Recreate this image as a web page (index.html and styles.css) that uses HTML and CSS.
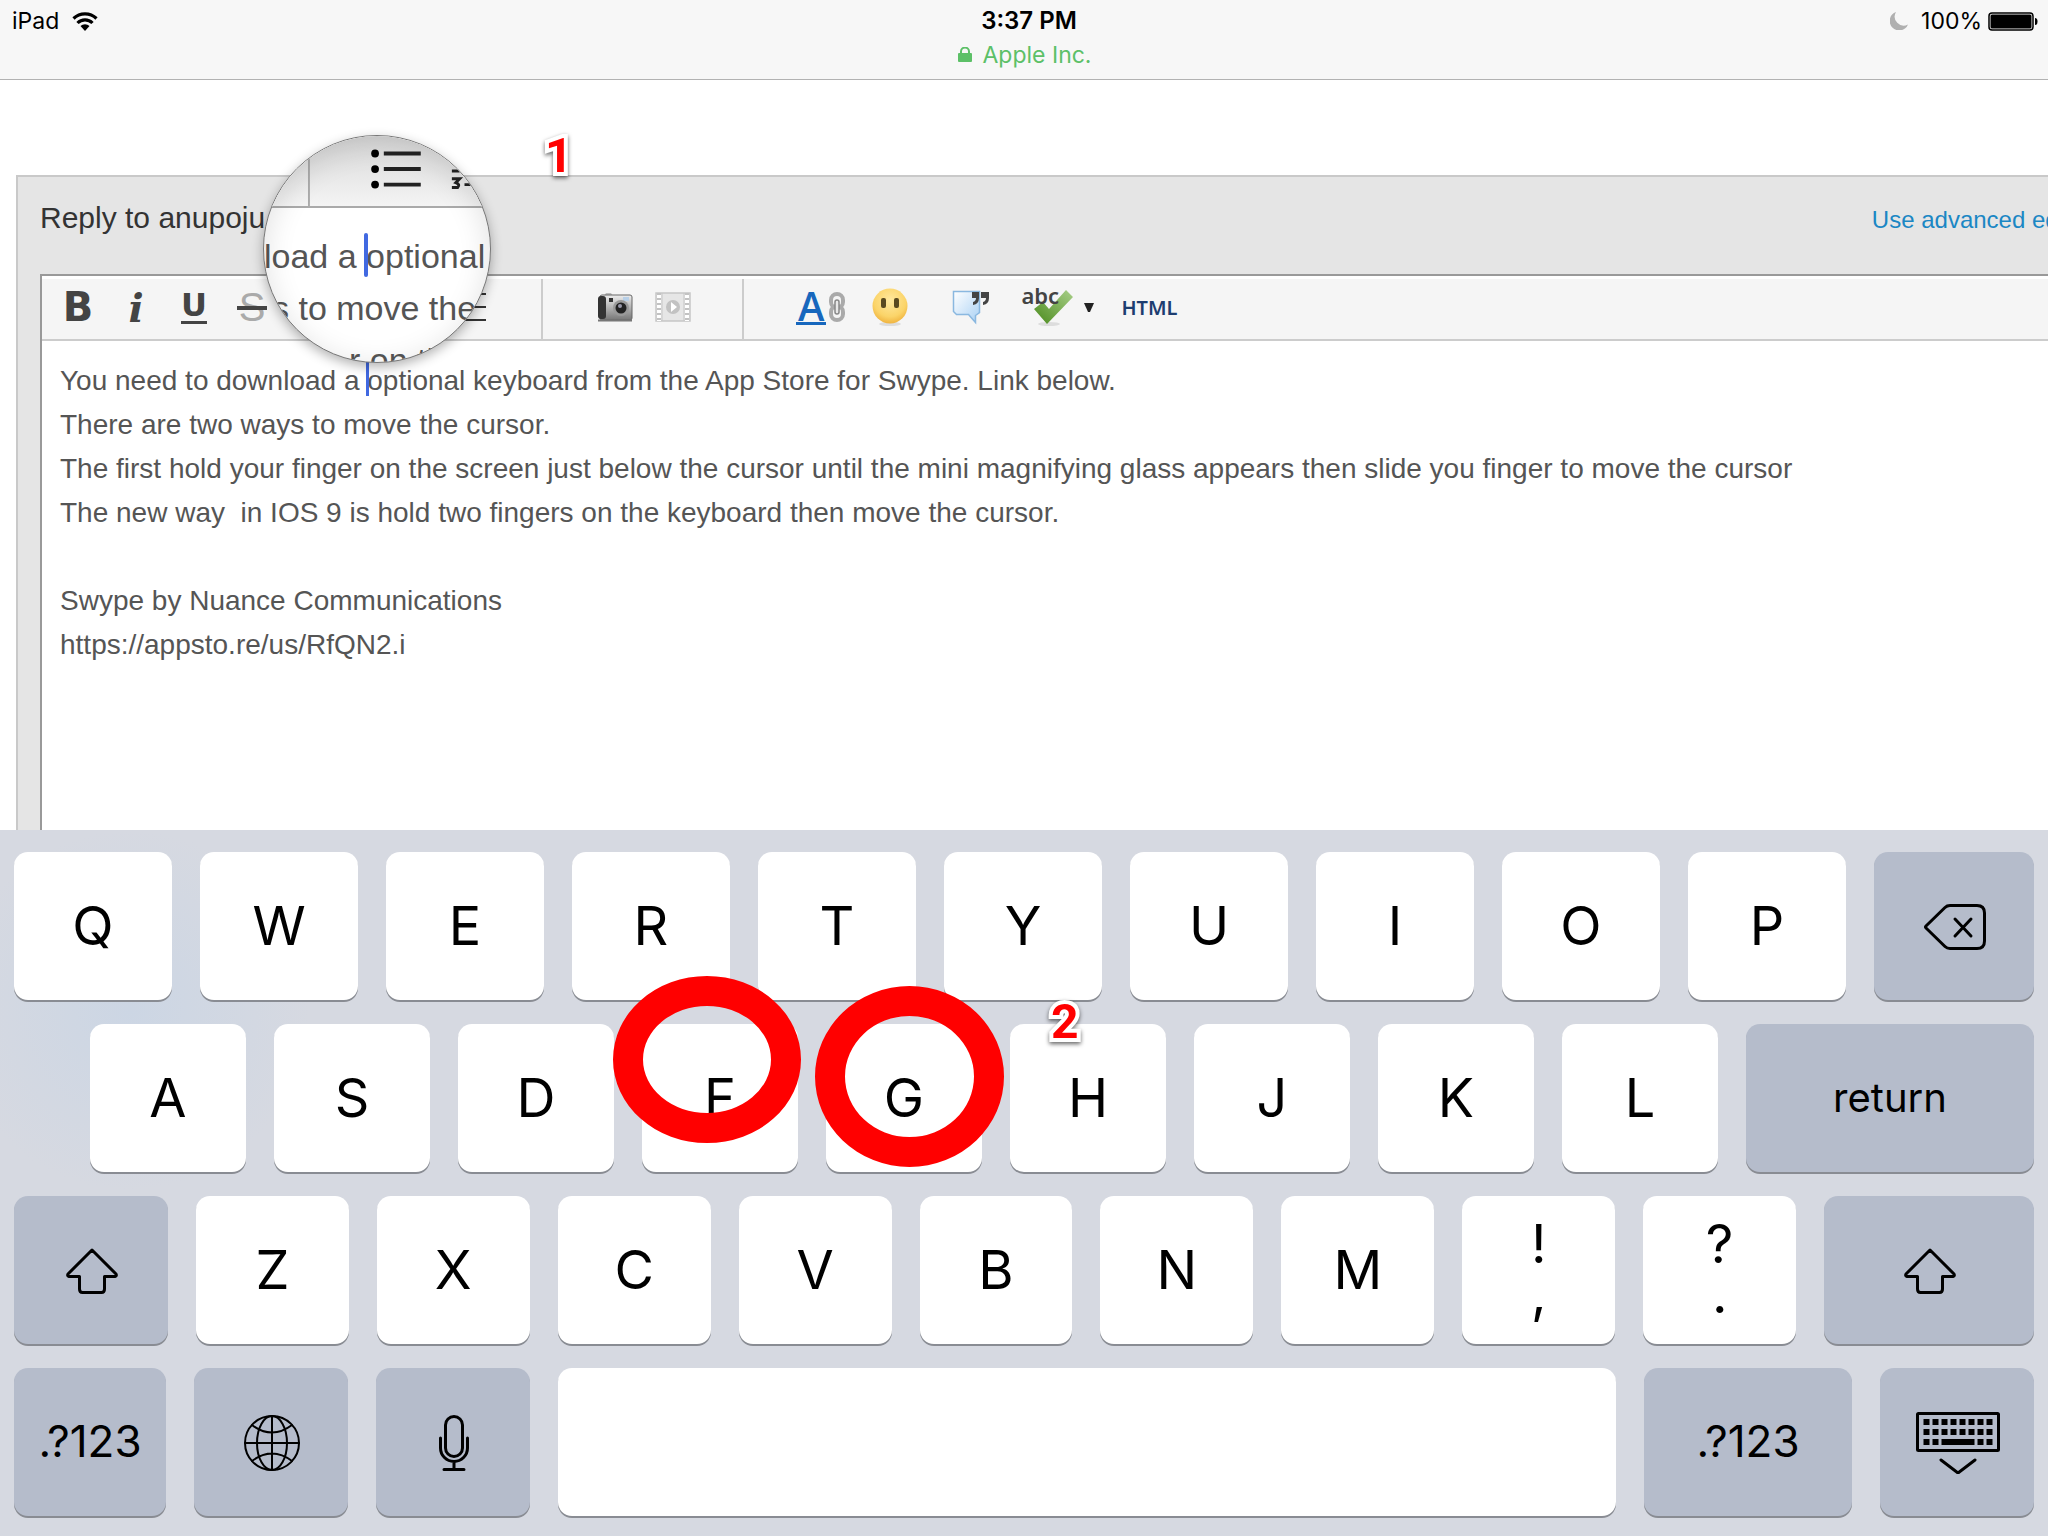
FILE: index.html
```html
<!DOCTYPE html>
<html lang="en">
<head>
    <meta charset="UTF-8">
    <meta name="viewport" content="width=device-width, initial-scale=1.0">
    <title>Reply to anupoju</title>
    <link rel="stylesheet" href="styles.css">
</head>
<body>
    <header class="status-bar">
        <div class="status-row">
            <div class="status-left">
                <span>iPad</span>
                <svg class="wifi" viewBox="0 0 26 19" width="26" height="19">
                    <path d="M1.500 6.500a16.500 16.500 0 0 1 23 0" fill="none" stroke="#000" stroke-width="3.200"/>
                    <path d="M5.500 11a10.500 10.500 0 0 1 15 0" fill="none" stroke="#000" stroke-width="3.200"/>
                    <path d="M13 19l-4.500-5a6.500 6.500 0 0 1 9 0z"/>
                </svg>
            </div>
            <div class="status-time">3:37 PM</div>
            <div class="status-right">
                <svg viewBox="0 0 18 18" width="18" height="18">
                    <path d="M6 0a9.500 9.500 0 1 0 12 12.500A9 9 0 0 1 6 0z" fill="#b0b0b0"/>
                </svg>
                <span>100%</span>
                <svg class="battery" viewBox="0 0 50 19" width="50" height="19">
                    <rect x="1" y="1" width="44" height="17" rx="3" fill="none" stroke="#000" stroke-width="1.500"/>
                    <rect x="2.500" y="2.500" width="41" height="14" rx="1.500"/>
                    <path d="M47 6q2.500 0 2.500 3.500T47 13z"/>
                </svg>
            </div>
        </div>
        <div class="site">
            <svg viewBox="0 0 14 16" width="14" height="16">
                <rect x="0" y="6" width="14" height="9" rx="1"/>
                <path d="M3 7V4.500a4 4 0 0 1 8 0V7" fill="none" stroke="#5cc067" stroke-width="2"/>
            </svg>
            <span>Apple Inc.</span>
        </div>
    </header>

    <main class="page">
        <section class="reply">
            <div class="reply-head">
                <h1>Reply to anupoju</h1>
                <a href="#">Use advanced editor</a>
            </div>
            <div class="editor">
                <div class="toolbar">
                    <div class="group group-format">
                        <button type="button" class="tool bold">B</button>
                        <button type="button" class="tool italic">i</button>
                        <button type="button" class="tool underline">U</button>
                        <button type="button" class="tool strike">S</button>
                        <button type="button" class="tool list" aria-label="Bullets">
                            <svg viewBox="0 0 32 30" width="32" height="30"><path d="M8 3h24M8 16h24M8 29h24" stroke="#333" stroke-width="2"/></svg>
                        </button>
                        <button type="button" class="tool list" aria-label="Numbers">
                            <svg viewBox="0 0 32 30" width="32" height="30"><path d="M8 3h24M8 16h24M8 29h24" stroke="#333" stroke-width="2"/></svg>
                        </button>
                        <button type="button" class="tool list" aria-label="Outdent">
                            <svg viewBox="0 0 32 30" width="32" height="30"><path d="M8 3h24M8 16h24M8 29h24" stroke="#333" stroke-width="2"/></svg>
                        </button>
                        <button type="button" class="tool list" aria-label="Indent">
                            <svg viewBox="0 0 32 30" width="32" height="30"><path d="M0 2h32M8 15h24M0 28h32" stroke="#333" stroke-width="2"/></svg>
                        </button>
                    </div>
                    <div class="group group-media">
                        <button type="button" class="tool" aria-label="Camera">
                            <svg viewBox="0 0 36 30" width="36" height="30">
                                <defs>
                                    <linearGradient id="cam" x1="0" y1="0" x2="0" y2="1">
                                        <stop offset="0" stop-color="#eee"/>
                                        <stop offset="1" stop-color="#777"/>
                                    </linearGradient>
                                </defs>
                                <path d="M7 4l2-3h5l2 3z" fill="#bbb"/>
                                <rect x="3" y="3" width="32" height="25" rx="2" fill="url(#cam)" stroke="#666"/>
                                <rect x="1" y="4" width="8" height="23" rx="3" fill="#333"/>
                                <rect x="12" y="6" width="4" height="4" fill="#333"/>
                                <rect x="26" y="5" width="6" height="4" fill="#b8d0e8"/>
                                <circle cx="24" cy="16" r="8" fill="#999"/>
                                <circle cx="24" cy="16" r="5.500" fill="#222"/>
                                <circle cx="23" cy="14" r="2" fill="#99a"/>
                                <path d="M1 28.500h34" stroke="#777" stroke-width="2"/>
                            </svg>
                        </button>
                        <button type="button" class="tool" aria-label="Video">
                            <svg viewBox="0 0 36 30" width="36" height="30">
                                <rect x="1" y="1" width="34" height="28" fill="#e6e6e6" stroke="#c6c6c6" stroke-width="1.500"/>
                                <path d="M4 2v27M32 2v27" stroke="#fff" stroke-width="4"/>
                                <path d="M4 1v28M32 1v28" stroke="#c2c2c2" stroke-width="4" stroke-dasharray="2 3"/>
                                <path d="M7 1v28M29 1v28" stroke="#c6c6c6" stroke-width="1"/>
                                <circle cx="18" cy="15" r="7" fill="#c2c2c2"/>
                                <path d="M16 10l6 5-6 5z" fill="#fff"/>
                            </svg>
                        </button>
                    </div>
                    <div class="group group-insert">
                        <button type="button" class="tool link">
                            <span>A</span>
                            <svg viewBox="0 0 18 32" width="18" height="32">
                                <rect x="3" y="3" width="12" height="14" rx="6" fill="none" stroke="#aaa" stroke-width="4"/>
                                <rect x="3" y="15" width="12" height="14" rx="6" fill="none" stroke="#aaa" stroke-width="4"/>
                                <rect x="7" y="9" width="4" height="14" rx="2" fill="#e8e8e8" stroke="#888" stroke-width="1.500"/>
                            </svg>
                        </button>
                        <button type="button" class="tool smiley" aria-label="Emoticons">
                            <svg viewBox="0 0 36 38" width="36" height="38">
                                <defs>
                                    <radialGradient id="face" cx=".5" cy=".35" r=".65">
                                        <stop offset="0" stop-color="#ffe9a0"/>
                                        <stop offset=".7" stop-color="#fbd469"/>
                                        <stop offset="1" stop-color="#f0b440"/>
                                    </radialGradient>
                                </defs>
                                <ellipse cx="18" cy="36" rx="11" ry="2" fill="#ddd"/>
                                <circle cx="18" cy="18" r="17.500" fill="url(#face)"/>
                                <rect x="9" y="10" width="5" height="10" rx="2" fill="#5a4a20"/>
                                <rect x="22" y="10" width="5" height="10" rx="2" fill="#5a4a20"/>
                            </svg>
                        </button>
                        <button type="button" class="tool quote" aria-label="Quote">
                            <svg viewBox="0 0 38 36" width="38" height="36">
                                <defs>
                                    <linearGradient id="bubble" x1="0" y1="0" x2="1" y2="1">
                                        <stop offset="0" stop-color="#fff"/>
                                        <stop offset="1" stop-color="#a8d0f4"/>
                                    </linearGradient>
                                </defs>
                                <path d="M1.500 2.500h26v21l-4 3v7l-7-8h-12l-3-3z" fill="url(#bubble)" stroke="#8ab8e0" stroke-width="1.500"/>
                                <path d="M20 3h7v6q0 6-6 7v-3q3-1 3-4h-4zM29 3h8v6q0 6-6 7v-3q3-1 3-4h-5z" fill="#444"/>
                            </svg>
                        </button>
                        <button type="button" class="tool spell">
                            <span>abc</span>
                            <svg viewBox="0 0 42 38" width="42" height="38">
                                <defs>
                                    <linearGradient id="tick" x1="1" y1="0" x2="0" y2="1">
                                        <stop offset="0" stop-color="#a8cf88"/>
                                        <stop offset="1" stop-color="#4a8a1c"/>
                                    </linearGradient>
                                </defs>
                                <ellipse cx="16" cy="36" rx="11" ry="2" fill="#ddd"/>
                                <path d="M1 21l9-7 6 7L33 2l7 7-26 27z" fill="url(#tick)"/>
                            </svg>
                        </button>
                        <button type="button" class="tool arrow" aria-label="Spelling language">
                            <svg viewBox="0 0 10 9" width="10" height="9"><path d="M0 0h10L6 9H4z" fill="#222"/></svg>
                        </button>
                        <button type="button" class="tool html">HTML</button>
                    </div>
                </div>
                <textarea class="message" aria-label="Message" spellcheck="false">
You need to download a optional keyboard from the App Store for Swype. Link below.
There are two ways to move the cursor.
The first hold your finger on the screen just below the cursor until the mini magnifying glass appears then slide you finger to move the cursor
The new way  in IOS 9 is hold two fingers on the keyboard then move the cursor.

Swype by Nuance Communications
https://appsto.re/us/RfQN2.i</textarea>
                <div class="caret"></div>
            </div>
        </section>
    </main>

    <!-- magnifying glass over the text cursor -->
    <div class="lens">
        <svg class="lens-tools" viewBox="0 0 227 72" width="227" height="72">
            <path d="M43 0v72" stroke="#aaa" stroke-width="2"/>
            <path d="M120 18h38M120 34h38M120 50h38" stroke="#222" stroke-width="4"/>
            <circle cx="111" cy="18" r="4"/>
            <circle cx="111" cy="34" r="4"/>
            <circle cx="111" cy="50" r="4"/>
            <path d="M190 36h8M190 44h8l-4 4q5 2 2 5h-6M203 50h12" fill="none" stroke="#222" stroke-width="3"/>
        </svg>
        <p class="lens-line first">load a <span>optional</span></p>
        <p class="lens-line second">s to move the</p>
        <p class="lens-line third">r on the</p>
        <div class="lens-caret"></div>
    </div>

    <div class="step step-one">1</div>

    <section class="keyboard">
        <div class="keys">
            <button type="button" class="key">Q</button>
            <button type="button" class="key">W</button>
            <button type="button" class="key">E</button>
            <button type="button" class="key">R</button>
            <button type="button" class="key">T</button>
            <button type="button" class="key">Y</button>
            <button type="button" class="key">U</button>
            <button type="button" class="key">I</button>
            <button type="button" class="key">O</button>
            <button type="button" class="key">P</button>
            <button type="button" class="key dark" aria-label="delete">
                <svg viewBox="0 0 62 46" width="62" height="46">
                    <path d="M26 1.500h27q7.500 0 7.500 7.500v28q0 7.500-7.500 7.500H26q-3 0-5-2L2 24q-1-1 0-2L21 3.500q2-2 5-2z"/>
                    <path d="M31 15l16 17M47 15L31 32"/>
                </svg>
            </button>
        </div>
        <div class="keys keys-middle">
            <button type="button" class="key">A</button>
            <button type="button" class="key">S</button>
            <button type="button" class="key">D</button>
            <button type="button" class="key">F</button>
            <button type="button" class="key">G</button>
            <button type="button" class="key">H</button>
            <button type="button" class="key">J</button>
            <button type="button" class="key">K</button>
            <button type="button" class="key">L</button>
            <button type="button" class="key dark return">return</button>
        </div>
        <div class="keys keys-shift">
            <button type="button" class="key dark" aria-label="shift">
                <svg viewBox="0 0 52 46" width="52" height="46">
                    <path d="M26 2L50 26q1 2-1 2.500H38.500V41q0 3.500-3 3.500h-19q-3 0-3-3.500V28.500H3Q1 28 2 26z"/>
                </svg>
            </button>
            <button type="button" class="key">Z</button>
            <button type="button" class="key">X</button>
            <button type="button" class="key">C</button>
            <button type="button" class="key">V</button>
            <button type="button" class="key">B</button>
            <button type="button" class="key">N</button>
            <button type="button" class="key">M</button>
            <button type="button" class="key double"><span>!</span><span>,</span></button>
            <button type="button" class="key double"><span>?</span><span>.</span></button>
            <button type="button" class="key dark" aria-label="shift">
                <svg viewBox="0 0 52 46" width="52" height="46">
                    <path d="M26 2L50 26q1 2-1 2.500H38.500V41q0 3.500-3 3.500h-19q-3 0-3-3.500V28.500H3Q1 28 2 26z"/>
                </svg>
            </button>
        </div>
        <div class="keys keys-bottom">
            <button type="button" class="key dark">.?123</button>
            <button type="button" class="key dark" aria-label="next keyboard">
                <svg class="thin" viewBox="0 0 56 56" width="56" height="56">
                    <circle cx="28" cy="28" r="27"/>
                    <ellipse cx="28" cy="28" rx="15" ry="27"/>
                    <path d="M28 1v54M1 28h54M8 10q20 15 40 0M8 46q20-15 40 0"/>
                </svg>
            </button>
            <button type="button" class="key dark" aria-label="dictate">
                <svg viewBox="0 0 30 56" width="30" height="56">
                    <rect x="6.500" y="1.500" width="17" height="40" rx="8.500"/>
                    <path d="M1.500 23v10a13.500 13.500 0 0 0 27 0V23M15 47v8M5 54.500h20"/>
                </svg>
            </button>
            <button type="button" class="key" aria-label="space"></button>
            <button type="button" class="key dark">.?123</button>
            <button type="button" class="key dark" aria-label="hide keyboard">
                <svg viewBox="0 0 84 62" width="84" height="62">
                    <rect x="1.500" y="1.500" width="81" height="37" rx="1"/>
                    <path d="M7.500 10h70M7.500 20h70" stroke-width="6" stroke-dasharray="6 3" stroke-linecap="butt"/>
                    <path d="M7.500 30h15M61.500 30h15" stroke-width="6" stroke-dasharray="6 3" stroke-linecap="butt"/>
                    <path d="M25.500 30h33" stroke-width="6" stroke-linecap="butt"/>
                    <path d="M25 48l17 13 17-13"/>
                </svg>
            </button>
        </div>

        <div class="touch touch-left"></div>
        <div class="touch touch-right"></div>
        <div class="step step-two">2</div>
    </section>
</body>
</html>
```
FILE: styles.css
```css
* {
    margin: 0;
    padding: 0;
    box-sizing: border-box;
}

body {
    font-family: "Liberation Sans", Arial, sans-serif;
    background-color: #fff;
    color: #000;
    position: relative;
    display: flex;
    flex-direction: column;
    height: 100vh;
    overflow: hidden;
}

button {
    font: inherit;
    color: inherit;
    background: none;
    border: none;
    cursor: pointer;
}

/* status bar */
.status-bar {
    font-family: Inter, sans-serif;
    font-size: 23px;
    background-color: #f7f7f7;
    border-bottom: 1px solid #b2b2b2;
    height: 80px;
    padding: 4px 10px 0 12px;
}

.status-row {
    display: grid;
    grid-template-columns: 1fr auto 1fr;
    align-items: center;
    line-height: 34px;
}

.status-left,
.status-right,
.site {
    display: flex;
    align-items: center;
}

.status-left {
    gap: 13px;
}

.status-right {
    justify-content: flex-end;
    gap: 13px;
}

.battery {
    margin-left: -7px;
}

.status-time {
    font-size: 24px;
    font-weight: 600;
    padding-left: 8px;
}

.site {
    justify-content: center;
    gap: 10px;
    color: #5cc067;
    fill: #5cc067;
    line-height: 34px;
}

/* reply form */
.page {
    flex: 1;
    min-height: 0;
    padding: 95px 0 0 16px;
    display: flex;
}

.reply {
    flex: 1;
    display: flex;
    flex-direction: column;
    background-color: #e5e5e5;
    border-top: 2px solid #c9c9c9;
    border-left: 2px solid #c9c9c9;
    padding-left: 22px;
    min-width: 0;
}

.reply-head {
    display: flex;
    justify-content: space-between;
    align-items: baseline;
    height: 97px;
    padding-top: 24px;
    line-height: 34px;
    margin-right: -44px;
}

h1 {
    font-size: 30px;
    font-weight: normal;
    color: #333;
}

.reply-head a {
    font-size: 24px;
    color: #1b87c4;
    text-decoration: none;
}

.editor {
    position: relative;
    flex: 1;
    min-height: 0;
    display: flex;
    flex-direction: column;
    background-color: #fff;
    border-top: 2px solid #999;
    border-left: 2px solid #999;
}

.toolbar {
    display: flex;
    height: 65px;
    background-color: #f5f5f5;
    border-top: 3px solid #fff;
    border-bottom: 2px solid #ccc;
}

.group {
    display: flex;
    align-items: center;
}

.group-format,
.group-media {
    border-right: 2px solid #ccc;
}

.group-format {
    padding: 0 44px 0 7px;
}

.group-media {
    padding: 0 40px 0 43px;
}

.group-insert {
    padding-left: 52px;
}

.tool {
    width: 58px;
    height: 60px;
    padding-bottom: 4px;
    display: flex;
    align-items: center;
    justify-content: center;
    font-size: 40px;
    color: #444;
}

.group-insert .tool {
    width: auto;
}

.bold,
.underline {
    font-family: "DejaVu Sans", sans-serif;
    font-weight: bold;
}

.italic {
    font-family: "DejaVu Serif", serif;
    font-style: italic;
    font-weight: bold;
}

.underline {
    font-size: 32px;
    padding-bottom: 8px;
    text-decoration: underline;
    text-decoration-thickness: 3px;
    text-underline-offset: 5px;
}

.strike {
    color: #aaa;
    position: relative;
}

.strike::after {
    content: "";
    position: absolute;
    left: 14px;
    right: 14px;
    top: 27px;
    height: 4px;
    background-color: #444;
}

.list {
    width: 54px;
}

.link {
    gap: 2px;
}

.link span {
    font-family: "Open Sans", sans-serif;
    font-weight: 600;
    font-size: 40px;
    line-height: 32px;
    color: #1767bd;
    border-bottom: 3px solid #1767bd;
    padding: 0 2px;
}

.smiley {
    margin-left: 26px;
}

.quote {
    margin-left: 44px;
}

.spell {
    position: relative;
    margin-left: 43px;
}

.spell span {
    position: absolute;
    left: -12px;
    top: 3px;
    font-family: "Noto Sans", sans-serif;
    font-size: 22px;
    font-weight: 600;
    line-height: 26px;
}

.arrow {
    margin-left: 9px;
}

.group-insert .html {
    margin-left: 27px;
    font-family: "Noto Sans", sans-serif;
    font-size: 20px;
    font-weight: 600;
    color: #1d3d70;
}

.message {
    flex: 1;
    width: 100%;
    border: none;
    outline: none;
    resize: none;
    overflow: hidden;
    padding: 18px 18px;
    font-family: "Liberation Sans", Arial, sans-serif;
    font-size: 28px;
    line-height: 44px;
    color: #555;
}

.caret {
    position: absolute;
    left: 324px;
    top: 86px;
    width: 3px;
    height: 34px;
    background-color: #4169e1;
}

/* magnifying glass */
.lens {
    position: absolute;
    left: 263px;
    top: 135px;
    width: 228px;
    height: 228px;
    border: 1px solid #777;
    border-radius: 50%;
    overflow: hidden;
    background-color: #fff;
    box-shadow: 0 4px 12px rgba(0, 0, 0, 0.3);
}

.lens::after {
    content: "";
    position: absolute;
    inset: 0;
    border-radius: 50%;
    box-shadow: inset 0 6px 30px rgba(0, 0, 0, 0.12);
}

.lens-tools {
    display: block;
    background: linear-gradient(#d8d8d8, #f4f4f4);
    border-bottom: 2px solid #aaa;
}

.lens-line {
    font-size: 34px;
    line-height: 52px;
    white-space: nowrap;
    color: #555;
}

.first {
    margin-top: 22px;
}

.second {
    margin-left: 8px;
}

.third {
    margin-left: 85px;
}

.lens-caret {
    position: absolute;
    left: 100px;
    top: 97px;
    width: 4px;
    height: 44px;
    border-radius: 2px;
    background-color: #4169e1;
}

/* keyboard */
.keyboard {
    position: relative;
    font-family: Inter, sans-serif;
    background: radial-gradient(circle at 130px 180px, #ccd6e4, #d6d9e1 180px);
    padding: 22px 14px 20px;
    display: flex;
    flex-direction: column;
    gap: 24px;
}

.keys {
    display: grid;
    grid-template-columns: repeat(10, 158fr) 160fr;
    column-gap: 28px;
}

.keys-middle {
    grid-template-columns: repeat(9, 156fr) 288fr;
    padding-left: 76px;
}

.keys-shift {
    grid-template-columns: 154fr repeat(9, 153fr) 210fr;
}

.keys-bottom {
    grid-template-columns: 152fr 154fr 154fr 1058fr 208fr 154fr;
}

.key {
    display: flex;
    align-items: center;
    justify-content: center;
    min-width: 0;
    height: 148px;
    padding-bottom: 2px;
    border-radius: 14px;
    background-color: #fff;
    box-shadow: 0 2px 0 #898c93;
    font-size: 54px;
}

.dark {
    background-color: #b5bccb;
    font-size: 44px;
}

.return {
    font-size: 40px;
}

.key svg {
    fill: none;
    stroke: #000;
    stroke-width: 3;
    stroke-linecap: round;
    stroke-linejoin: round;
    margin: 4px 0 0 2px;
}

.key .thin {
    stroke-width: 2;
}

.double {
    flex-direction: column;
    line-height: 50px;
}

/* annotations */
.touch {
    position: absolute;
    border: 30px solid #f00;
    border-radius: 50%;
    pointer-events: none;
}

.touch-left {
    left: 613px;
    top: 146px;
    width: 188px;
    height: 167px;
}

.touch-right {
    left: 815px;
    top: 156px;
    width: 189px;
    height: 181px;
}

.step {
    position: absolute;
    font-family: Roboto, Arial, sans-serif;
    font-size: 48px;
    font-weight: bold;
    line-height: 48px;
    color: #f00;
    -webkit-text-stroke: 8px #fff;
    paint-order: stroke fill;
    filter: drop-shadow(0 2px 2px rgba(0, 0, 0, 0.6));
}

.step-one {
    left: 545px;
    top: 132px;
}

.step-two {
    left: 1051px;
    top: 168px;
}
```
